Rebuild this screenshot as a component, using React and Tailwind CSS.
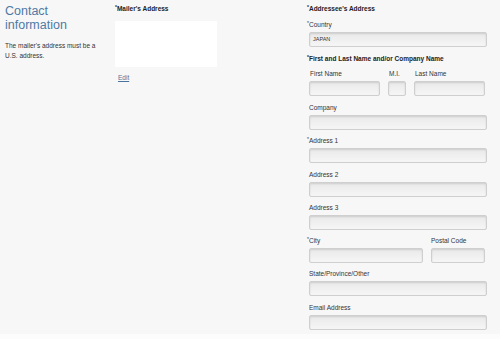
import React from 'react';

const Req = () => <span className="text-[5px] align-top leading-none">*</span>;

const Input = ({ className = '', value }) => (
    <div className={`h-[15px] rounded-[2px] border border-[#cfcfcf] bg-gradient-to-b from-[#e9e9e9] to-[#f6f6f6] shadow-[inset_0_1px_2px_rgba(0,0,0,0.12)] flex items-center px-[4px] text-[5.5px] text-[#333] ${className}`}>
        {value}
    </div>
);

const Field = ({ label, required, className = '', inputClass = 'w-[178px]', last }) => (
    <div className={`${last ? '' : 'mb-[7.3px]'} ${className}`}>
        <div className={`h-[8px] leading-[8px] mb-[3px] ${required ? '' : 'pl-[2px]'}`}>
            {required && <Req />}{label}
        </div>
        <Input className={inputClass} />
    </div>
);

const App = () => {
    return (
        <div className="w-[500px] h-[339px] bg-[#f8f7f7] relative overflow-hidden text-[#333] text-[6.5px]" style={{ fontFamily: '"Liberation Sans", Arial, sans-serif' }}>
            <div className="flex pl-[5px]">
                {/* left column */}
                <div className="w-[110px] pt-[4px]">
                    <h2 className="text-[12.5px] leading-[14px] text-[#4e7aa6]">
                        Contact<br />information
                    </h2>
                    <p className="mt-[9px] w-[95px] leading-[9.5px] text-[6.5px] text-[#333]">
                        The mailer's address must be a U.S. address.
                    </p>
                </div>

                {/* mailer column */}
                <div className="w-[192px] pt-[5px]">
                    <div className="h-[8px] leading-[8px] font-bold text-[#222]"><Req />Mailer's Address</div>
                    <div className="mt-[8px] w-[102px] h-[46px] bg-white"></div>
                    <a href="#" className="block mt-[7px] ml-[3px] leading-[8px] text-[#4a74a0] underline">Edit</a>
                </div>

                {/* addressee column */}
                <div className="flex-1 pt-[5px]">
                    <div className="h-[8px] leading-[8px] font-bold text-[#222]"><Req />Addressee's Address</div>

                    <div className="mt-[8px] mb-[8px]">
                        <div className="h-[8px] leading-[8px] mb-[3px]"><Req />Country</div>
                        <Input className="w-[178px] ml-[2px] pl-[3px]" value="JAPAN" />
                    </div>

                    <div className="h-[8px] leading-[8px] font-bold text-[#222] mb-[7px]"><Req />First and Last Name and/or Company Name</div>

                    <div className="flex ml-[2px] mb-[8px]">
                        <div className="w-[79px]">
                            <div className="h-[8px] leading-[8px] mb-[3px] pl-[1px]">First Name</div>
                            <Input className="w-[71px]" />
                        </div>
                        <div className="w-[26px]">
                            <div className="h-[8px] leading-[8px] mb-[3px] pl-[1px]">M.I.</div>
                            <Input className="w-[18px]" />
                        </div>
                        <div>
                            <div className="h-[8px] leading-[8px] mb-[3px] pl-[1px]">Last Name</div>
                            <Input className="w-[71px]" />
                        </div>
                    </div>

                    <Field label="Company" inputClass="w-[178px] ml-[2px]" />
                    <Field label="Address 1" required inputClass="w-[178px] ml-[2px]" />
                    <Field label="Address 2" inputClass="w-[178px] ml-[2px]" />
                    <Field label="Address 3" inputClass="w-[178px] ml-[2px]" />

                    <div className="flex mb-[7.3px]">
                        <div className="w-[124px]">
                            <div className="h-[8px] leading-[8px] mb-[3px]"><Req />City</div>
                            <Input className="w-[114px] ml-[2px]" />
                        </div>
                        <div>
                            <div className="h-[8px] leading-[8px] mb-[3px]">Postal Code</div>
                            <Input className="w-[54px]" />
                        </div>
                    </div>

                    <Field label="State/Province/Other" inputClass="w-[178px] ml-[2px]" />
                    <Field label="Email Address" inputClass="w-[178px] ml-[2px]" last />
                </div>
            </div>
            <div className="absolute left-0 right-0 bottom-0 h-[5px] bg-[#fcfcfc]"></div>
        </div>
    );
};

export default App;
